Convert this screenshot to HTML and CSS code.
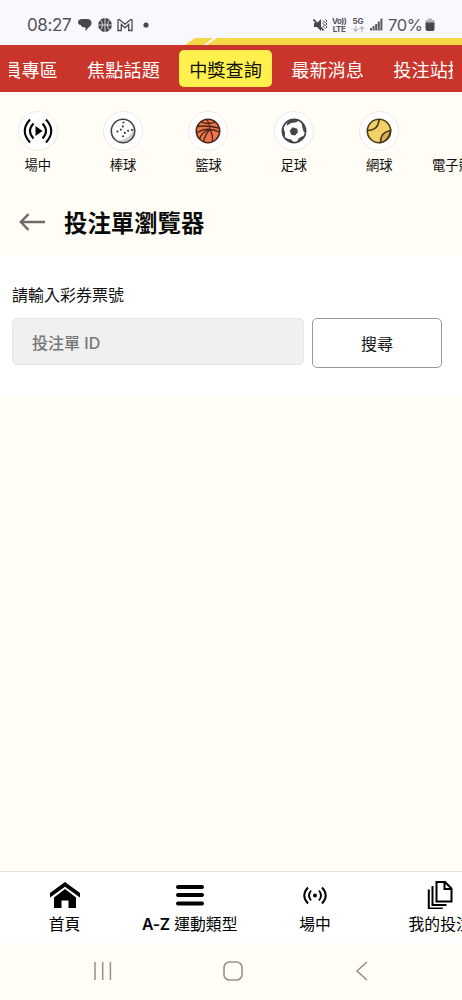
FILE: index.html
```html
<!DOCTYPE html>
<html lang="zh-Hant">
  <head>
    <meta charset="UTF-8" />
    <meta name="viewport" content="width=device-width, initial-scale=1.0" />
    <title>投注單瀏覽器</title>
    <link rel="stylesheet" href="styles.css">
  </head>
  <body>
    <div class="status-bar">
      <span class="time">08:27</span>
      <svg class="status-left" width="74" height="16" viewBox="0 0 74 16">
        <path d="M5 2h5c3 0 4.500 1.500 4.500 4S13 9.500 12 10l-3.500 4v-3.500C5 10.500 4 9.500 4 8 1.500 8 1 6.500 1 5c0-2 2-3 4-3z" fill="#48474c" />
        <circle cx="28" cy="8" r="6.900" fill="#48474c" />
        <path d="M28 1v14M21 8h14M23.500 3q4 5 0 10M32.500 3q-4 5 0 10" fill="none" stroke="#f8f7fe" stroke-width="0.800" />
        <path d="M41 13.500V3l1.200-.6 5.800 4.800 5.800-4.800 1.200.6v10.500h-3.300V7.500L48 10.800l-3.700-3.300v6z" fill="none" stroke="#48474c" stroke-width="1.300" />
        <circle cx="69" cy="8" r="2.600" fill="#48474c" />
      </svg>
      <div class="status-right">
        <svg width="14" height="14" viewBox="0 0 14 14">
          <path d="M1 5h3l4-4v12L4 9H1z" fill="#48474c" />
          <path d="M.5 1.500l10 11" stroke="#48474c" stroke-width="1.800" />
          <path d="M10 2.500l1.500 1.500L10 5.500 11.500 7 10 8.500l1.500 1.500M12.500 1.500L14 3l-1.500 1.500L14 6l-1.500 1.500L14 9l-1.500 1.500" fill="none" stroke="#48474c" />
        </svg>
        <span class="tiny volte">Vo))<br />LTE</span>
        <span class="tiny net">5G<br /><i>↓↑</i></span>
        <svg class="signal" width="13" height="13" viewBox="0 0 13 13" fill="#5c5b60">
          <path d="M0 10h2v2.500H0zM2.600 8h2v4.500h-2zM5.200 6h2v6.500h-2zM7.800 3.500h2v9h-2zM10.400.5h2v12h-2z" />
        </svg>
        <span class="percent">70%</span>
        <svg class="battery" width="10" height="14" viewBox="0 0 10 14">
          <path d="M3 .5h4V2H3zM.5 2h9v3h-9z" fill="#b4b3b8" />
          <path d="M.5 4.500h9V11q0 2-2 2h-5q-2 0-2-2z" fill="#48474c" />
        </svg>
      </div>
    </div>

    <div class="stripe">
      <svg width="462" height="7" viewBox="0 0 462 7">
        <path d="M195 0h18l-9 7h-19zM217 0h245v7H207z" fill="#f5d845" />
      </svg>
    </div>

    <nav class="tabs">
      <div class="tabs-scroll">
        <a class="tab">會員專區</a>
        <a class="tab">焦點話題</a>
        <a class="tab active">中獎查詢</a>
        <a class="tab">最新消息</a>
        <a class="tab">投注站據點</a>
      </div>
    </nav>

    <div class="sports">
      <a class="sport">
        <span class="circle">
          <svg width="30" height="26" viewBox="0 0 30 26" fill="none" stroke="#000" stroke-width="2">
            <path d="M12.500 8v10l7-5z" fill="#000" stroke="none" />
            <path d="M10.500 5.500q-7 7.500 0 15M19.500 5.500q7 7.500 0 15M7 1.500q-10.500 11.500 0 23M23 1.500q10.500 11.500 0 23" />
          </svg>
        </span>
        場中
      </a>
      <a class="sport">
        <span class="circle">
          <svg width="26" height="26" viewBox="0 0 26 26">
            <circle cx="13" cy="13" r="11.700" fill="#fff" />
            <path d="M23.500 7Q24 20 8 23q7 3 12-1.500T23.500 7" fill="#ccc" />
            <circle cx="13" cy="13" r="11.700" fill="none" stroke="#424242" stroke-width="1.600" />
            <path d="M13.500 4.500Q13.500 13.500 4 14M22 12Q13 12.500 12.500 21.500" fill="none" stroke="#333" stroke-width="2" stroke-linecap="round" stroke-dasharray="0.100 3.800" />
          </svg>
        </span>
        棒球
      </a>
      <a class="sport">
        <span class="circle">
          <svg width="26" height="26" viewBox="0 0 26 26" fill="none" stroke="#4a2418" stroke-width="1.300">
            <circle cx="13" cy="13" r="11.700" fill="#ec7749" stroke-width="1.600" />
            <path d="M6 3.700q6 3.300 14 .5M2.300 8.500Q12 7 24 10M1.500 15Q12 8 24.500 14M12 1.500q3 5 3 10-5 5-6.500 12.500M15 11.500q3 5 2.500 12.500M4.500 21q2-7 10.500-9.500" />
          </svg>
        </span>
        籃球
      </a>
      <a class="sport">
        <span class="circle">
          <svg width="26" height="26" viewBox="0 0 26 26">
            <circle cx="13" cy="13" r="11.600" fill="#fff" stroke="#424448" stroke-width="1.700" />
            <path d="M11.500 9.300l4.700 1.400.8 3.600-3 3.200-3.800-.8-1.500-4z" fill="#424448" />
            <path d="M8 2.200L18 2l-3 1.800-5 .7-4 2.500zM21 4.500l3.300 7.500-1 2-1.300-4zM22.500 18.500l-6 5.300 1.500-3.300 3-1.500zM4.500 20.500l8 3.800-2.500-2.300-3-.7zM1.800 10l.4 7.500 1.300 1-.2-4.500z" fill="#424448" stroke="#424448" />
          </svg>
        </span>
        足球
      </a>
      <a class="sport">
        <span class="circle">
          <svg width="26" height="26" viewBox="0 0 26 26" stroke="#4a3a18" stroke-width="1.600">
            <circle cx="13" cy="13" r="11.700" fill="#f4d166" />
            <path d="M24.500 12.500Q14.500 14 14.500 24.500 23 23 24.500 12.500z" fill="#d9b35a" />
            <path d="M13 1.500Q12.500 12 2 12.500" fill="none" />
          </svg>
        </span>
        網球
      </a>
      <a class="sport esport">電子競技</a>
    </div>

    <div class="page-title">
      <svg width="27" height="18" viewBox="0 0 27 18" fill="none" stroke="#6c6b68" stroke-width="2.400">
        <path d="M9.500 1.200L1.800 9l7.700 7.800M2 9h24" />
      </svg>
      <h1>投注單瀏覽器</h1>
    </div>

    <form class="search">
      <label for="ticket">請輸入彩券票號</label>
      <div class="search-row">
        <input type="text" id="ticket" name="ticket" placeholder="投注單 ID" />
        <button type="button">搜尋</button>
      </div>
    </form>

    <main></main>

    <nav class="bottom-nav">
      <a>
        <svg width="30" height="28" viewBox="0 0 30 28">
          <path d="M15 1l15 11v4.500L15 5.800 0 16.500V12z" />
          <path d="M15 8l11 8.500V27h-7.500v-7.500h-7V27H4V16.500z" />
        </svg>
        首頁
      </a>
      <a>
        <svg width="30" height="28" viewBox="0 0 30 28" stroke="#000" stroke-width="4" stroke-linecap="round">
          <path d="M3 6h24M3 14h24M3 22.500h24" />
        </svg>
        <span><b>A-Z</b> 運動類型</span>
      </a>
      <a>
        <svg width="24" height="28" viewBox="0 0 24 28" fill="none" stroke="#000" stroke-width="1.900">
          <circle cx="12" cy="14.500" r="2" fill="#000" stroke="none" />
          <path d="M8 9.500q-4 5 0 10M16 9.500q4 5 0 10M5 6.500q-7.500 8 0 16M19 6.500q7.500 8 0 16" />
        </svg>
        場中
      </a>
      <a>
        <svg width="26" height="28" viewBox="0 0 26 28" fill="none" stroke="#000" stroke-width="2">
          <path d="M9.500 1H18l6.500 6.500v13h-15zM17.500 1v7h7M5.500 5v19h14M1.800 8.500v19h14" />
        </svg>
        我的投注
      </a>
    </nav>

    <div class="system-nav">
      <svg width="20" height="20" viewBox="0 0 20 20" fill="none" stroke="#93918d" stroke-width="1.500">
        <path d="M2 1v18M9.700 1v18M17.400 1v18" />
      </svg>
      <svg width="20" height="20" viewBox="0 0 20 20" fill="none" stroke="#93918d" stroke-width="1.600">
        <rect x="1" y="1" width="18" height="18" rx="5.500" />
      </svg>
      <svg width="20" height="20" viewBox="0 0 20 20" fill="none" stroke="#93918d" stroke-width="1.600">
        <path d="M15 1L5 10l10 9" />
      </svg>
    </div>
  </body>
</html>
```

FILE: styles.css
```css
* {
  box-sizing: border-box;
}

html,
body {
  height: 100%;
  margin: 0;
}

body {
  display: flex;
  flex-direction: column;
  overflow: hidden;
  background-color: #fffdf5;
  color: #111;
  font-family: Inter, "Noto Sans CJK TC", sans-serif;
}

svg {
  display: block;
  flex: none;
}

.status-bar {
  display: flex;
  align-items: center;
  height: 38px;
  padding: 11px 27px 0 27px;
  background-color: #f9f8fe;
  color: #55545a;
}

.time {
  width: 50px;
  font-size: 17px;
  line-height: 20px;
  letter-spacing: -0.4px;
}

.status-left {
  margin-top: 0;
}

.status-right {
  display: flex;
  align-items: center;
  margin-left: auto;
}

.tiny {
  font-size: 8px;
  font-weight: 700;
  line-height: 8px;
  text-align: center;
}

.volte {
  width: 14px;
  margin-left: 5px;
  letter-spacing: -0.5px;
}

.net {
  width: 12px;
  margin-left: 6px;
}

.net i {
  color: #aaa9af;
  font-style: normal;
  letter-spacing: -1px;
}

.signal {
  margin-left: 6px;
}

.percent {
  width: 36px;
  margin-left: 5px;
  font-size: 16.5px;
  line-height: 20px;
  letter-spacing: -0.4px;
}

.battery {
  margin-left: 1px;
}

.stripe {
  height: 7px;
  background-color: #f9f8fe;
}

.tabs {
  height: 47px;
  padding: 5px 9px;
  background-color: #c9352b;
}

.tabs-scroll {
  display: flex;
  gap: 9.3px;
  overflow: hidden;
}

.tab {
  flex: none;
  height: 37px;
  padding: 0 10px;
  border-radius: 5px;
  color: #fff;
  font-size: 18.2px;
  line-height: 40px;
}

.tab:first-child {
  margin-left: -34px;
}

.tab.active {
  background-color: #fff04d;
  color: #111;
}

.sports {
  display: flex;
  height: 97px;
  margin-left: -5px;
  overflow: hidden;
}

.sport {
  display: flex;
  flex: none;
  flex-direction: column;
  align-items: center;
  width: 85.4px;
  font-size: 13.3px;
  line-height: 20px;
}

.circle {
  display: flex;
  align-items: center;
  justify-content: center;
  width: 40px;
  height: 40px;
  margin: 19px 0 4px;
  border: 1px solid #ecebe8;
  border-radius: 50%;
  background-color: #fff;
}

.esport {
  align-items: flex-start;
  padding: 63px 0 0 10px;
}

.page-title {
  display: flex;
  align-items: center;
  height: 67px;
  padding: 0 0 1px 19px;
}

.page-title h1 {
  margin: 3px 0 0 18px;
  color: #0b0b0b;
  font-size: 23.4px;
  font-weight: 700;
  line-height: 34px;
}

.search {
  height: 140px;
  padding: 27px 20px 0 12px;
  background-color: #fff;
}

.search label {
  display: block;
  font-size: 16px;
  line-height: 24px;
}

.search-row {
  display: flex;
  align-items: flex-start;
  gap: 8px;
  margin-top: 11px;
}

.search input {
  flex: 1;
  min-width: 0;
  height: 47px;
  padding: 2px 19px 0;
  border: 1px solid #e6e6e6;
  border-radius: 5px;
  background-color: #f0f0f0;
  font: 500 16px Inter, "Noto Sans CJK TC", sans-serif;
}

.search input::placeholder {
  color: #777;
}

.search button {
  width: 130px;
  height: 50px;
  border: 1px solid #999;
  border-radius: 5px;
  background-color: #fff;
  color: #111;
  font: 16px Inter, "Noto Sans CJK TC", sans-serif;
}

main {
  flex: 1;
}

.bottom-nav {
  display: flex;
  height: 71px;
  padding: 9px 0 0 2px;
  border-top: 1px solid #e4e3de;
  background-color: #fff;
  overflow: hidden;
}

.bottom-nav a {
  display: flex;
  flex: none;
  flex-direction: column;
  align-items: center;
  width: 125.2px;
  color: #000;
  font-size: 15.8px;
  line-height: 24px;
  white-space: nowrap;
}

.bottom-nav svg {
  margin-bottom: 4px;
}

.bottom-nav b {
  font-weight: 600;
  letter-spacing: -0.3px;
}

.system-nav {
  display: flex;
  align-items: center;
  justify-content: space-between;
  height: 58px;
  padding: 0 90px 1px 93px;
}
```
